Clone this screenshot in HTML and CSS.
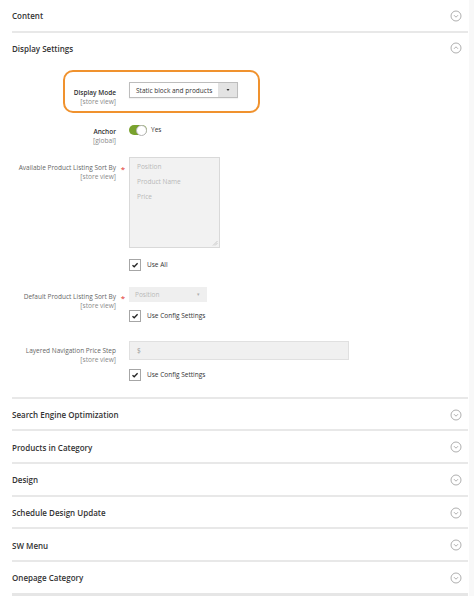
FILE: index.html
```html
<!DOCTYPE html>
<html>
<head>
<meta charset="utf-8">
<link rel="stylesheet" href="styles.css">
</head>
<body>
<div class="page">
  <section class="section">
    <div class="section-head"><span class="title">Content</span><svg class="chev" viewBox="0 0 12 12"><circle cx="6" cy="6" r="5" /><path d="M4 5.2 L6 7.2 L8 5.2" /></svg></div>
  </section>

  <section class="section">
    <div class="section-head open"><span class="title">Display Settings</span><svg class="chev" viewBox="0 0 12 12"><circle cx="6" cy="6" r="5" /><path d="M4 6.8 L6 4.8 L8 6.8" /></svg></div>
    <div class="fieldset">
      <div class="row row-mode">
        <div class="highlight"></div>
        <div class="label strong">Display Mode<span class="scope">[store view]</span></div>
        <div class="req"></div>
        <div class="control">
          <div class="select"><span class="select-text">Static block and products</span><span class="select-arrow"><svg viewBox="0 0 6 6"><path d="M1.5 2 L4.5 2 L3 4 Z"/></svg></span></div>
        </div>
      </div>

      <div class="row row-anchor">
        <div class="label strong">Anchor<span class="scope">[global]</span></div>
        <div class="req"></div>
        <div class="control">
          <div class="toggle-line"><span class="toggle"><span class="knob"></span></span><span class="toggle-text">Yes</span></div>
        </div>
      </div>

      <div class="row row-avail">
        <div class="label">Available Product Listing Sort By<span class="scope">[store view]</span></div>
        <div class="req">*</div>
        <div class="control">
          <div class="multiselect">
            <div class="opt">Position</div>
            <div class="opt">Product Name</div>
            <div class="opt">Price</div>
            <svg class="grip" viewBox="0 0 6 6"><path d="M1 5.5 L5.5 1 M3 5.5 L5.5 3" /></svg>
          </div>
          <label class="check"><span class="box"><svg viewBox="0 0 10 10"><path d="M2.5 5.2 L4.2 6.8 L7.6 3.2" /></svg></span><span>Use All</span></label>
        </div>
      </div>

      <div class="row row-default">
        <div class="label">Default Product Listing Sort By<span class="scope">[store view]</span></div>
        <div class="req">*</div>
        <div class="control">
          <div class="select disabled"><span class="select-text">Position</span><span class="mini-arrow">▾</span></div>
          <label class="check"><span class="box"><svg viewBox="0 0 10 10"><path d="M2.5 5.2 L4.2 6.8 L7.6 3.2" /></svg></span><span>Use Config Settings</span></label>
        </div>
      </div>

      <div class="row row-step">
        <div class="label">Layered Navigation Price Step<span class="scope">[store view]</span></div>
        <div class="req"></div>
        <div class="control">
          <div class="input"><span>$</span></div>
          <label class="check"><span class="box"><svg viewBox="0 0 10 10"><path d="M2.5 5.2 L4.2 6.8 L7.6 3.2" /></svg></span><span>Use Config Settings</span></label>
        </div>
      </div>
    </div>
  </section>

  <section class="section">
    <div class="section-head"><span class="title">Search Engine Optimization</span><svg class="chev" viewBox="0 0 12 12"><circle cx="6" cy="6" r="5" /><path d="M4 5.2 L6 7.2 L8 5.2" /></svg></div>
  </section>
  <section class="section">
    <div class="section-head"><span class="title">Products in Category</span><svg class="chev" viewBox="0 0 12 12"><circle cx="6" cy="6" r="5" /><path d="M4 5.2 L6 7.2 L8 5.2" /></svg></div>
  </section>
  <section class="section">
    <div class="section-head"><span class="title">Design</span><svg class="chev" viewBox="0 0 12 12"><circle cx="6" cy="6" r="5" /><path d="M4 5.2 L6 7.2 L8 5.2" /></svg></div>
  </section>
  <section class="section">
    <div class="section-head"><span class="title">Schedule Design Update</span><svg class="chev" viewBox="0 0 12 12"><circle cx="6" cy="6" r="5" /><path d="M4 5.2 L6 7.2 L8 5.2" /></svg></div>
  </section>
  <section class="section">
    <div class="section-head"><span class="title">SW Menu</span><svg class="chev" viewBox="0 0 12 12"><circle cx="6" cy="6" r="5" /><path d="M4 5.2 L6 7.2 L8 5.2" /></svg></div>
  </section>
  <section class="section last">
    <div class="section-head"><span class="title">Onepage Category</span><svg class="chev" viewBox="0 0 12 12"><circle cx="6" cy="6" r="5" /><path d="M4 5.2 L6 7.2 L8 5.2" /></svg></div>
  </section>
</div>
</body>
</html>
```

FILE: styles.css
```css
html, body {
  margin: 0;
  padding: 0;
  background: #f8f8f8;
}
body {
  font-family: "Open Sans", "Noto Sans", "Liberation Sans", sans-serif;
  color: #303030;
}
.page {
  width: 456px;
  padding: 0 1px 0 12px;
  background: #ffffff;
  height: 596px;
  overflow: hidden;
}
.section {
  border-bottom: 2px solid #e8e8e8;
}
.section.last {
  border-bottom: 3px solid #e6e6e6;
}
.section-head {
  height: 29.67px;
  display: flex;
  align-items: center;
  justify-content: space-between;
  padding-top: 1px;
}
.title {
  font-size: 8px;
  font-weight: 600;
  color: #333333;
}
.chev {
  width: 12px;
  height: 12px;
  margin-right: 6px;
  fill: none;
  stroke: #9a9a9a;
  stroke-width: 0.8;
}
.fieldset {
  padding: 0 0 16px 0;
  font-size: 6.5px;
}
.row {
  position: relative;
  display: grid;
  grid-template-columns: 104px 13px 1fr;
  align-items: start;
}
.row-mode { margin-top: 19px; }
.row-anchor { margin-top: 19px; }
.row-avail { margin-top: 12px; }
.row-default { margin-top: 16px; }
.row-step { margin-top: 19px; }
.label {
  text-align: right;
  line-height: 9px;
  padding-top: 5.5px;
  color: #666666;
}
.label.strong {
  font-weight: 600;
  color: #303030;
}
.row-anchor .label { padding-top: 2px; }
.row-avail .label { padding-top: 6.5px; }
.scope {
  display: block;
  font-weight: 400;
  color: #8a8a8a;
  font-size: 6.6px;
}
.req {
  color: #e02b27;
  font-size: 8px;
  line-height: 9px;
  padding-top: 7px;
  text-align: center;
  padding-left: 1px;
}
.row-default .req { padding-top: 6px; }
.control {
  display: flex;
  flex-direction: column;
  align-items: flex-start;
}
.highlight {
  position: absolute;
  left: 51px;
  top: -12px;
  width: 193px;
  height: 39px;
  border: 2px solid #f0922e;
  border-radius: 10px;
}
.select {
  width: 107px;
  height: 14px;
  border: 1px solid #bdbdbd;
  background: #ffffff;
  display: flex;
  align-items: center;
  box-shadow: 0 1px 1px rgba(0,0,0,0.05);
}
.select-text {
  flex: 1;
  padding-left: 6px;
  color: #333333;
}
.select-arrow {
  width: 19px;
  height: 100%;
  background: #e3e3e3;
  display: flex;
  align-items: center;
  justify-content: center;
}
.select-arrow svg {
  width: 6px;
  height: 6px;
  fill: #303030;
}
.select.disabled {
  width: 78px;
  height: 15px;
  border: none;
  background: #efefef;
  box-shadow: none;
}
.select.disabled .select-text {
  color: #b8b8b8;
}
.mini-arrow {
  color: #b0b0b0;
  font-size: 5px;
  margin-right: 7px;
}
.toggle-line {
  display: flex;
  align-items: flex-start;
  gap: 4px;
}
.toggle {
  width: 18px;
  height: 10px;
  border-radius: 5px;
  background: #79a22e;
  position: relative;
  display: block;
}
.knob {
  position: absolute;
  right: 0;
  top: 0;
  width: 9px;
  height: 9px;
  border-radius: 50%;
  background: #ffffff;
  border: 0.5px solid #b5b5b5;
}
.toggle-text {
  line-height: 9px;
  color: #333333;
}
.multiselect {
  position: relative;
  width: 91px;
  height: 91px;
  background: #f2f2f2;
  border: 0.5px solid #d9d9d9;
  padding-top: 1px;
  box-sizing: border-box;
}
.opt {
  color: #b8b8b8;
  padding-left: 7px;
  line-height: 15px;
}
.grip {
  position: absolute;
  right: 1px;
  bottom: 1px;
  width: 6px;
  height: 6px;
  stroke: #b0b0b0;
  stroke-width: 0.6;
  fill: none;
}
.check {
  display: flex;
  align-items: center;
  gap: 6px;
  margin-top: 11px;
  color: #333333;
  line-height: 11px;
}
.row-default .check { margin-top: 8px; }
.row-step .check { margin-top: 9px; }
.box {
  width: 10px;
  height: 10px;
  border: 0.8px solid #a6a6a6;
  background: #ffffff;
  display: flex;
  align-items: center;
  justify-content: center;
}
.box svg {
  width: 10px;
  height: 10px;
  fill: none;
  stroke: #222222;
  stroke-width: 1.3;
}
.input {
  width: 220px;
  height: 19px;
  background: #f0f0f0;
  border: 0.5px solid #e0e0e0;
  display: flex;
  align-items: center;
  padding-left: 7px;
  box-sizing: border-box;
  color: #999999;
}
```
